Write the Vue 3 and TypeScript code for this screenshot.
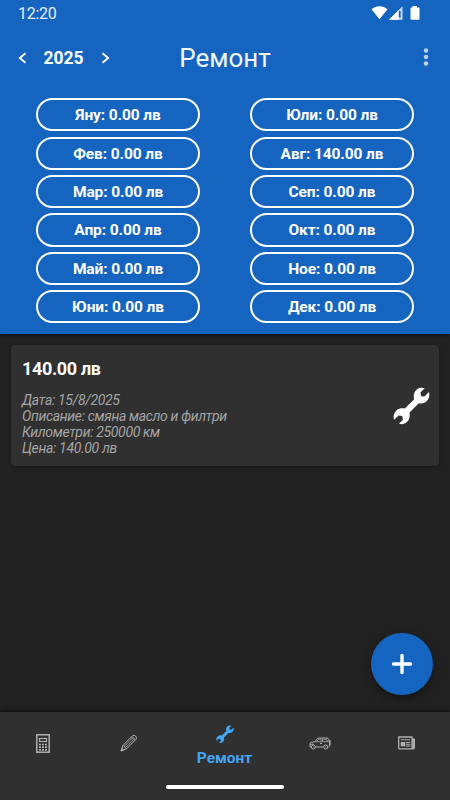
<script setup lang="ts">
interface Month {
  name: string
  total: string
}

const columns: Month[][] = [
  [
    { name: 'Яну', total: '0.00' },
    { name: 'Фев', total: '0.00' },
    { name: 'Мар', total: '0.00' },
    { name: 'Апр', total: '0.00' },
    { name: 'Май', total: '0.00' },
    { name: 'Юни', total: '0.00' },
  ],
  [
    { name: 'Юли', total: '0.00' },
    { name: 'Авг', total: '140.00' },
    { name: 'Сеп', total: '0.00' },
    { name: 'Окт', total: '0.00' },
    { name: 'Ное', total: '0.00' },
    { name: 'Дек', total: '0.00' },
  ],
]

const details: string[] = [
  'Дата: 15/8/2025',
  'Описание: смяна масло и филтри',
  'Километри: 250000 км',
  'Цена: 140.00 лв',
]

const wrench =
  'M95 3L82 16L84 27L94 28L108 14C111 26 108 36 99 44C93 49 85 50 77 48L49 76C51 88 49 98 41 105C35 111 26 113 17 110L29 98L27 87L16 85L2 98C-1 87 2 76 10 69C17 63 26 62 35 64L63 36C60 25 62 14 70 7C77 1 86 0 95 3Z'
</script>

<template>
  <div class="screen">
    <header class="header">
      <div class="status">
        <span class="clock">12:20</span>
        <svg class="status-icons" width="50" height="16" viewBox="0 0 50 16" fill="#fff">
          <path d="M.5 3.200C5-.7 12-.7 16.500 3.200L8.500 13.200Z" />
          <path d="M18 13.800L31.500 .3V13.800Z" opacity=".75" />
          <path d="M18 13.800L27.800 4V13.800Z" />
          <path d="M27.800 5h1.800v6.500h-1.800z" fill="#1565c0" />
          <path d="M41.500 0h4.500v1.500h1.700q.8 0 .8.8v10.700q0 .8-.8.8h-7.400q-.8 0-.8-.8V2.300q0-.8.800-.8h1.200z" />
        </svg>
      </div>
      <div class="toolbar">
        <div class="year">
          <svg width="9" height="12" viewBox="0 0 9 12"><path d="M7.500 1.200L1.800 6L7.500 10.800" /></svg>
          <span>2025</span>
          <svg width="9" height="12" viewBox="0 0 9 12"><path d="M1.500 1.200L7.200 6L1.500 10.800" /></svg>
        </div>
        <h1>Ремонт</h1>
        <svg class="more" width="6" height="20" viewBox="0 0 6 20">
          <circle cx="3" cy="3.500" r="2.200" /><circle cx="3" cy="10" r="2.200" /><circle cx="3" cy="16.500" r="2.200" />
        </svg>
      </div>
      <div class="months">
        <div v-for="(column, i) in columns" :key="i" class="column">
          <div v-for="m in column" :key="m.name" class="pill">{{ m.name }}: {{ m.total }} лв</div>
        </div>
      </div>
    </header>

    <main class="content">
      <article class="card">
        <div>
          <h2>140.00 лв</h2>
          <p v-for="line in details" :key="line">{{ line }}</p>
        </div>
        <svg class="card-icon" width="37" height="38" viewBox="-1 -1 112 115" fill="#fff"><path :d="wrench" /></svg>
      </article>
      <button class="fab" aria-label="+">
        <svg width="22" height="22" viewBox="0 0 22 22"><path d="M11 2.500V19.500M2.500 11H19.500" /></svg>
      </button>
    </main>

    <nav class="nav">
      <div class="tab">
        <svg width="14" height="19" viewBox="0 0 14 19" fill="none" stroke="#b0b0b0">
          <rect x=".8" y=".8" width="12.400" height="17.400" stroke-width="1.500" />
          <rect x="3.500" y="4.500" width="7" height="3" stroke-width="1.200" />
          <path d="M3 10.500h2m1 0h2m1 0h2M3 13.200h2m1 0h2m1 0h2M3 15.800h2m1 0h2m1 0h2" stroke-width="1.700" />
        </svg>
      </div>
      <div class="tab">
        <svg width="18" height="18" viewBox="0 0 18 18" fill="none" stroke="#b0b0b0" stroke-width="1">
          <path d="M1.200 16.800L2.800 11.500L12.500 1.800Q14 .6 15.600 2Q17.300 3.700 16 5.300L6.300 15Z" />
          <path d="M2.800 11.500L4.500 12L4.800 13.500L6.300 15M4.500 12L13.500 3M5.500 13.500L15 4.300M11.500 2.800L15 6.400" stroke-width=".8" />
          <path d="M1 17l.9-2.500 1.600 1.600z" fill="#b0b0b0" />
        </svg>
      </div>
      <div class="tab active">
        <svg width="18" height="18.500" viewBox="-1 -1 112 115" fill="#42a5f5"><path :d="wrench" /></svg>
        <span>Ремонт</span>
      </div>
      <div class="tab">
        <svg width="22" height="13" viewBox="0 0 22 13" fill="none" stroke="#b0b0b0" stroke-width="1">
          <path d="M2.300 10H1V6.300Q1.500 5.200 6 4.600L8.300 1.500Q9 1 10 1H18Q19.200 1 19.700 2.300L20.600 5.500V9.300L19.500 10M6 10h8.500" />
          <path d="M6 4.700H19.800M8 4.500L9.500 2.200H12V4.500M13.500 2.200V4.500M13.500 2.200H17.500L18.500 4.500" stroke-width=".8" />
          <path d="M20.800 3V8" stroke-width="1.500" />
          <circle cx="4.300" cy="10" r="2" /><circle cx="16.700" cy="10" r="2" />
          <path d="M4 10h.6M16.400 10h.6M1.200 7.200h3.500M11 6.500h2" />
        </svg>
      </div>
      <div class="tab">
        <svg width="17" height="14" viewBox="0 0 17 14" fill="none" stroke="#b0b0b0">
          <path d="M14 12.900H2Q.7 12.900.7 11.600V1H14V11.500Q14 12.900 15.200 12.900Q16.300 12.900 16.300 11.500V3.200H14" stroke-width="1.300" />
          <path d="M14.300 3h2v9.200h-2z" fill="#b0b0b0" stroke="none" />
          <path d="M2.700 6h4.600v4.300H2.700z" fill="#b0b0b0" stroke="none" />
          <path d="M2.700 3.800H12.200M8 6.500h4.300M8 8.200h4.300M8 10h4.300" stroke-width="1.100" />
        </svg>
      </div>
      <div class="home-bar"></div>
    </nav>
  </div>
</template>

<style>
body {
  margin: 0;
  background: #212121;
}
</style>

<style scoped>
.screen {
  width: 450px;
  height: 800px;
  display: flex;
  flex-direction: column;
  overflow: hidden;
  background: #212121;
  color: #fff;
  font-family: Roboto, 'Noto Sans', sans-serif;
}
.header {
  height: 334px;
  flex: none;
  background: #1565c0;
  box-shadow: 0 1px 3px rgba(0, 0, 0, 0.6);
}
.status {
  height: 28px;
  display: flex;
  align-items: flex-start;
  justify-content: space-between;
  padding: 0 29.500px 0 18px;
}
.clock {
  margin-top: 4px;
  font-size: 16px;
  line-height: 19px;
  letter-spacing: -0.3px;
  color: #e6effa;
}
.status-icons {
  margin-top: 6px;
}
.toolbar {
  height: 60px;
  display: grid;
  grid-template-columns: 150px 150px 150px;
  align-items: center;
}
.year {
  display: flex;
  align-items: center;
  gap: 17px;
  padding-left: 17.500px;
  margin-top: -1px;
  font-size: 17.500px;
  font-weight: 700;
}
.year svg {
  fill: none;
  stroke: #fff;
  stroke-width: 1.800;
}
h1 {
  margin: 0;
  text-align: center;
  font-size: 26px;
  line-height: 32px;
  font-weight: 400;
  color: #f3f7fc;
}
.more {
  justify-self: end;
  margin: -2px 21px 0 0;
  fill: #bcd3ee;
}
.months {
  display: flex;
  justify-content: space-between;
  padding: 10.200px 36px 0;
}
.column {
  width: 164px;
  display: flex;
  flex-direction: column;
  gap: 5.200px;
}
.pill {
  box-sizing: border-box;
  height: 33.200px;
  border: 2px solid #fff;
  border-radius: 17px;
  text-align: center;
  font-size: 15.500px;
  line-height: 31px;
  letter-spacing: -0.1px;
  font-weight: 700;
}
.content {
  flex: 1;
  display: flex;
  flex-direction: column;
  justify-content: space-between;
  padding: 11px 11px 17px;
}
.card {
  box-sizing: border-box;
  height: 121px;
  display: flex;
  justify-content: space-between;
  padding: 12px 9.500px 0 11px;
  border-radius: 4px;
  background: #303030;
  box-shadow: 0 1px 3px rgba(0, 0, 0, 0.3);
}
h2 {
  margin: 0 0 12px;
  font-size: 18px;
  line-height: 23px;
  letter-spacing: -0.35px;
  font-weight: 700;
}
p {
  margin: 0;
  font-size: 14px;
  line-height: 16px;
  letter-spacing: -0.34px;
  font-style: italic;
  color: #a5a5a5;
}
.card-icon {
  margin-top: 29.500px;
}
.fab {
  align-self: flex-end;
  width: 62px;
  height: 62px;
  margin-right: 6px;
  padding: 0;
  display: grid;
  place-items: center;
  border: 0;
  border-radius: 50%;
  background: #1565c0;
  box-shadow: 0 4px 9px rgba(0, 0, 0, 0.4);
}
.fab path {
  stroke: #fff;
  stroke-width: 3.400;
  stroke-linecap: round;
}
.nav {
  box-sizing: border-box;
  height: 88px;
  flex: none;
  display: grid;
  grid-template-columns: 86px 86px 105px 86px 87px;
  grid-template-rows: 62px auto;
  background: #303030;
  box-shadow: 0 -1px 4px rgba(0, 0, 0, 0.7);
}
.tab {
  display: flex;
  flex-direction: column;
  align-items: center;
  justify-content: center;
}
.active {
  justify-content: flex-start;
  padding-top: 13px;
  gap: 4px;
  color: #42a5f5;
  font-size: 15.500px;
  line-height: 20px;
  font-weight: 700;
}
.home-bar {
  grid-column: 1 / -1;
  justify-self: center;
  width: 118px;
  height: 4px;
  margin-top: 11px;
  border-radius: 2px;
  background: #fff;
}
</style>
